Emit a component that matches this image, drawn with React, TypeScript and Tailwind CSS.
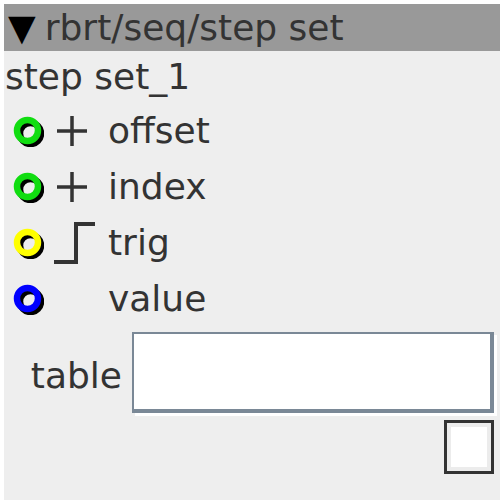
import React from "react";

type Port = { name: string; color: string; kind: "plus" | "trig" | "none" };

const ports: Port[] = [
  { name: "offset", color: "#11dd11", kind: "plus" },
  { name: "index", color: "#11dd11", kind: "plus" },
  { name: "trig", color: "#ffff00", kind: "trig" },
  { name: "value", color: "#0000ff", kind: "none" },
];

function Ring({ color }: { color: string }) {
  return (
    <svg width="32" height="32" viewBox="0 0 32 32" className="shrink-0">
      <circle cx="18.5" cy="18.5" r="10.5" fill="none" stroke="#000" strokeWidth="6.5" />
      <circle cx="15.5" cy="15.5" r="10.5" fill="none" stroke={color} strokeWidth="6.5" />
    </svg>
  );
}

function Symbol({ kind }: { kind: Port["kind"] }) {
  if (kind === "plus") {
    return (
      <svg width="30" height="30" viewBox="0 0 30 30" className="ml-[13px]">
        <path d="M0 15 H30 M15 0 V30" stroke="#333" strokeWidth="3.5" fill="none" />
      </svg>
    );
  }
  if (kind === "trig") {
    return (
      <svg width="42" height="44" viewBox="0 0 42 44" className="ml-[10px]">
        <path d="M0 41 H22 V3 H41" stroke="#333" strokeWidth="4" fill="none" />
      </svg>
    );
  }
  return null;
}

export default function App() {
  return (
    <div className="h-[504px] w-[504px] bg-white p-[4px] font-['DejaVu_Sans',sans-serif] text-[#333]">
      <div className="flex h-[496px] w-[496px] flex-col bg-[#eeeeee]">
        {/* header */}
        <div className="flex h-[47px] items-center bg-[#999999] pl-[4px] text-[36px] leading-none">
          <span className="text-black">▼</span>
          <span className="ml-[9px]">rbrt/seq/step set</span>
        </div>

        <div className="flex h-[52px] items-center pl-[1px] text-[36px] leading-none">step set_1</div>

        {ports.map((p) => (
          <div key={p.name} className="flex h-[56px] items-center pl-[8px]">
            <Ring color={p.color} />
            <div className="flex w-[56px] items-center">
              <Symbol kind={p.kind} />
            </div>
            <span className="ml-[8px] text-[36px] leading-none">{p.name}</span>
          </div>
        ))}

        {/* table field */}
        <div className="mt-[5px] flex items-center">
          <span className="w-[118px] pt-[6px] text-right text-[36px] leading-none">table</span>
          <div className="ml-[10px] h-[81px] w-[362px] border-t-2 border-l-2 border-r-4 border-b-4 border-[#7a8896] bg-white shadow-[3px_3px_0_#ffffff]" />
        </div>

        <div className="mt-[7px] flex justify-end pr-[6px]">
          <div className="h-[54px] w-[50px] border-[3px] border-[#333] bg-white shadow-[inset_0_0_0_4px_#ececec]" />
        </div>
      </div>
    </div>
  );
}
